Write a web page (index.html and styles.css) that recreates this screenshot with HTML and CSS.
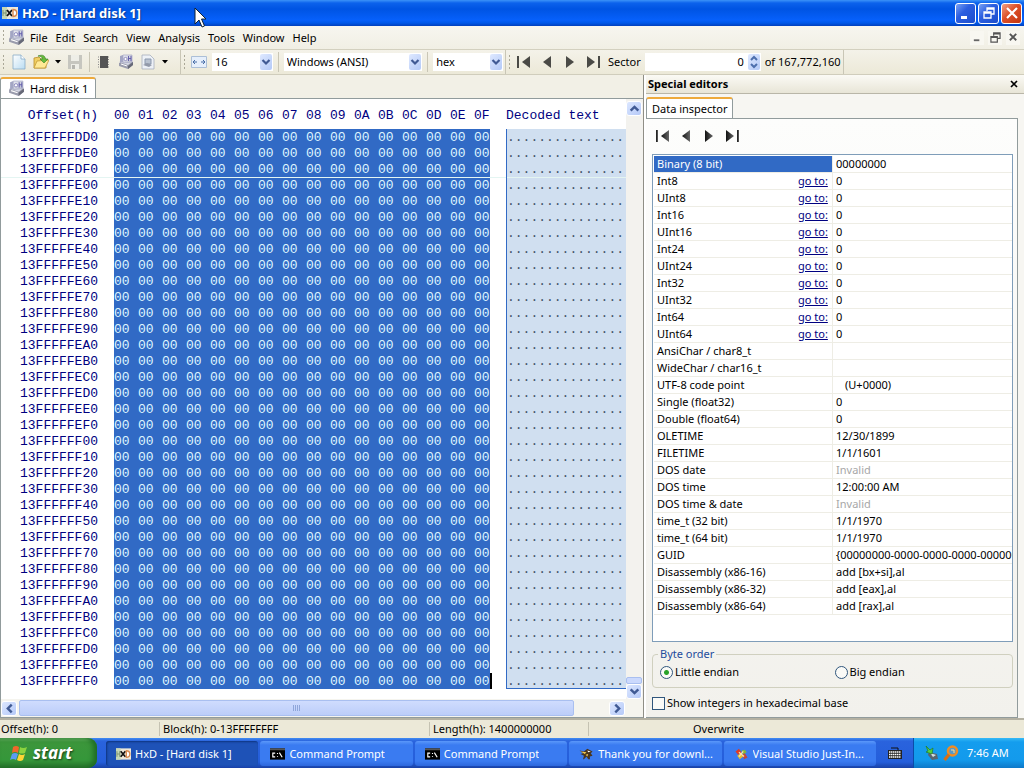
FILE: index.html
```html
<!DOCTYPE html>
<html lang="en">
<head>
<meta charset="utf-8">
<title>HxD - [Hard disk 1]</title>
<link rel="stylesheet" href="styles.css">
</head>
<body>
<svg class="defs" aria-hidden="true">
  <defs>
    <linearGradient id="silver" x1="0" y1="0" x2="1" y2="1"><stop offset="0" stop-color="#eceef5"/><stop offset="1" stop-color="#b4b7c8"/></linearGradient>
    <linearGradient id="page" x1="0" y1="0" x2="1" y2="1"><stop offset="0" stop-color="#fff"/><stop offset="1" stop-color="#b9dcf2"/></linearGradient>
    <linearGradient id="dark" x1="0" y1="0" x2="1" y2="0"><stop offset="0" stop-color="#111"/><stop offset="1" stop-color="#666"/></linearGradient>
  </defs>
  <symbol id="disk" viewBox="0 0 16 16">
    <path d="M1 9l4-2 10 1v3l-5 4-9-3z" fill="#9a9cad"/><path d="M1 8l4-3 10 2-5 4z" fill="#d5d8e4"/><path d="M10 12l5-4v3l-5 4z" fill="#666977"/>
    <path d="M2 2l3-1v7l-3 1z" fill="#a3a6c4"/><path d="M5 1h9v7l-9 1z" fill="url(#silver)" stroke="#a6a8c4" stroke-width=".7"/>
    <circle cx="7.500" cy="5" r="1.600" fill="#fff" stroke="#827eb8" stroke-width=".8"/><path d="M10.500 2v5M13 2v5M10.500 4.500H13" stroke="#6661ad" stroke-width="1"/><path d="M3 10l6 2" stroke="#fff"/>
  </symbol>
  <symbol id="hxd" viewBox="0 0 16 12">
    <path d="M0 0h16v12H0z" fill="#eee8d9"/><path d="M0 0h5v12H0z" fill="#c6d7b6"/><path d="M1 3v6M4 3v6M1 6h3" stroke="#7c9170" stroke-width="1"/>
    <path d="M5 3l5 6M10 3L5 9" stroke="#111" stroke-width="1.800"/><path d="M11 2.500c5 0 5 7 0 7z" fill="#fff" stroke="#d98a50" stroke-width="1.400"/>
  </symbol>
  <symbol id="first" viewBox="0 0 14 14"><path d="M0 1h2v12H0z"/><path d="M13 1v12L5 7z"/></symbol>
  <symbol id="prev" viewBox="0 0 14 14"><path d="M11 1v12L3 7z"/></symbol>
  <symbol id="next" viewBox="0 0 14 14"><path d="M3 1v12l8-6z"/></symbol>
  <symbol id="last" viewBox="0 0 14 14"><path d="M1 1v12l8-6z"/><path d="M12 1h2v12h-2z"/></symbol>
  <symbol id="chev" viewBox="0 0 10 10"><path d="M1.500 3L5 6.500 8.500 3" fill="none" stroke="#405a94" stroke-width="2.200"/></symbol>
  <symbol id="restore" viewBox="0 0 12 12"><path d="M4 4V1h7v6H8M4 2h7M1 5h7v6H1zM1 6h7" fill="none" stroke="currentColor" stroke-width="1.300"/></symbol>
  <symbol id="cmd" viewBox="0 0 16 12"><path d="M0 0h16v12H0z" fill="#000"/><path d="M0 0h16v2H0z" fill="#555"/><path d="M5.500 5H3v4h2.500M8 5v1M8 8v1M10 4.500l3 5" stroke="#fff" stroke-width="1.200" fill="none"/></symbol>
</svg>

<header class="titlebar">
  <svg class="app-icon"><use href="#hxd"/></svg>
  <h1>HxD - [Hard disk 1]</h1>
  <div class="win-buttons">
    <button class="win-btn" aria-label="Minimize"><svg viewBox="0 0 12 12"><path d="M1 9h6v3H1z" fill="#fff"/></svg></button>
    <button class="win-btn" aria-label="Restore"><svg><use href="#restore"/></svg></button>
    <button class="win-btn close" aria-label="Close"><svg viewBox="0 0 12 12"><path d="M1 1l10 10M11 1L1 11" stroke="#fff" stroke-width="2.200"/></svg></button>
  </div>
  <svg class="pointer" viewBox="0 0 13 21"><path d="M1 1v16l4-4 3 7 2.500-1L7.500 12H12z" fill="#fff" stroke="#123" stroke-width="1"/></svg>
</header>

<nav class="menubar">
  <span class="grip"></span>
  <svg class="icon"><use href="#disk"/></svg>
  <button>File</button><button>Edit</button><button>Search</button><button>View</button><button>Analysis</button><button>Tools</button><button>Window</button><button>Help</button>
  <div class="mdi">
    <button aria-label="Minimize document"><svg viewBox="0 0 12 12"><path d="M2 8h6v2H2z" fill="#666"/></svg></button>
    <button aria-label="Restore document"><svg><use href="#restore"/></svg></button>
    <button aria-label="Close document"><svg viewBox="0 0 12 12"><path d="M2 2l7 7M9 2L2 9" stroke="#555" stroke-width="2"/></svg></button>
  </div>
</nav>

<div class="toolbar">
  <div class="tools files">
    <span class="grip"></span>
    <button aria-label="New"><svg viewBox="0 0 16 16"><path d="M2 1h8l4 4v10H2z" fill="url(#page)" stroke="#88abc6" stroke-width=".8"/><path d="M10 1v4h4" fill="#fff" stroke="#88abc6" stroke-width=".8"/></svg></button>
    <button aria-label="Open"><svg viewBox="0 0 16 16"><path d="M1 14V4l5-1 2 2h5v9z" fill="#f0cf61" stroke="#b88d2c" stroke-width=".8"/><path d="M1 14l3-7 12-1-4 8z" fill="#ffe995" stroke="#c49a36" stroke-width=".8"/><path d="M5 2c5-2 7 0 7.500 3H15l-4 4-4-4h2.500C9 3 8 2 5 2z" fill="#67bb3c" stroke="#398026" stroke-width=".6"/></svg></button>
    <button aria-label="Recent files"><svg class="tri" viewBox="0 0 6 4"><path d="M0 0h6L3 3.500z"/></svg></button>
    <button aria-label="Save"><svg viewBox="0 0 16 16"><path d="M1 1h14v14H1z" fill="#c6c6bf"/><path d="M4 1h8v6H4zM4 10h8v5H4z" fill="#eeeee7"/><path d="M5 11h3v4H5z" fill="#b5b5af"/></svg></button>
    <span class="sep"></span>
    <button aria-label="Open main memory"><svg viewBox="0 0 16 16"><path d="M2 3h12M2 5.500h12M2 8h12M2 10.500h12M2 13h12" stroke="#888" stroke-dasharray="1 1"/><path d="M4 2h8v12H4z" fill="#555"/></svg></button>
    <button aria-label="Open disk"><svg><use href="#disk"/></svg></button>
    <button aria-label="Open disk image"><svg viewBox="0 0 16 16"><path d="M2 1h8l4 4v10H2z" fill="#edf1f7" stroke="#a7afbc" stroke-width=".8"/><path d="M5 5h6v5H5z" fill="#b9c2d0" stroke="#8b98ad"/><path d="M3 11l4-2 5 2-3 2z" fill="#9299a9"/></svg></button>
    <button aria-label="Disk image options"><svg class="tri" viewBox="0 0 6 4"><path d="M0 0h6L3 3.500z"/></svg></button>
  </div>
  <div class="tools formats">
    <span class="grip"></span>
    <button aria-label="Bytes per row"><svg viewBox="0 0 16 16"><path d="M.5 2.500h15v11H.5z" fill="#e6effb" stroke="#acbfd7"/><path d="M6 8H2M4 6L2 8l2 2M10 8h4M12 6l2 2-2 2" fill="none" stroke="#476da6"/></svg></button>
    <label class="combo bytes"><select aria-label="Bytes per row"><option>16</option></select><span class="drop"><svg><use href="#chev"/></svg></span></label>
    <span class="sep"></span>
    <label class="combo charset"><select aria-label="Character set"><option>Windows (ANSI)</option></select><span class="drop"><svg><use href="#chev"/></svg></span></label>
    <span class="sep"></span>
    <label class="combo base"><select aria-label="Offset base"><option>hex</option></select><span class="drop"><svg><use href="#chev"/></svg></span></label>
  </div>
  <div class="tools sectors">
    <span class="grip"></span>
    <div class="steps">
      <button aria-label="First sector"><svg><use href="#first"/></svg></button><button aria-label="Previous sector"><svg><use href="#prev"/></svg></button><button aria-label="Next sector"><svg><use href="#next"/></svg></button><button aria-label="Last sector"><svg><use href="#last"/></svg></button>
    </div>
    <label for="sector">Sector</label>
    <div class="combo spin"><input id="sector" type="text" value="0"><span class="drop"><svg viewBox="0 0 10 14"><path d="M2 5l3-3 3 3M2 9l3 3 3-3" fill="none" stroke="#4d6fad" stroke-width="2"/></svg></span></div>
    <span>of 167,772,160</span>
  </div>
</div>

<main class="workspace">
  <section class="document">
    <div class="tabs"><button class="tab doc-tab"><svg class="icon"><use href="#disk"/></svg>Hard disk 1</button></div>
    <div class="editor">
      <div class="hex-view">
        <table class="hex">
          <colgroup><col class="c-offset"><col span="15" class="c-byte"><col class="c-end"><col class="c-gap"><col></colgroup>
          <thead><tr id="hex-head"></tr></thead>
          <tbody id="hex-rows"></tbody>
        </table>
      </div>
      <div class="vscroll"><button class="arrow" aria-label="Scroll up"><svg class="up"><use href="#chev"/></svg></button><span class="vthumb"></span><button class="arrow" aria-label="Scroll down"><svg><use href="#chev"/></svg></button></div>
      <div class="hscroll"><button class="arrow" aria-label="Scroll left"><svg class="left"><use href="#chev"/></svg></button><span class="hthumb"><i></i><i></i><i></i><i></i></span><button class="arrow" aria-label="Scroll right"><svg class="right"><use href="#chev"/></svg></button></div>
    </div>
  </section>

  <aside class="side">
    <header class="side-head"><h2>Special editors</h2><button aria-label="Close panel"><svg viewBox="0 0 8 8"><path d="M1 1l6 6M7 1L1 7" stroke="#000" stroke-width="1.700"/></svg></button></header>
    <div class="tabs side-tabs"><button class="tab">Data inspector</button></div>
    <div class="inspector">
      <div class="steps"><button aria-label="First"><svg><use href="#first"/></svg></button><button aria-label="Previous"><svg><use href="#prev"/></svg></button><button aria-label="Next"><svg><use href="#next"/></svg></button><button aria-label="Last"><svg><use href="#last"/></svg></button></div>
      <div class="values-box">
        <table class="values">
          <colgroup><col class="c-name"><col class="c-goto"><col></colgroup>
          <tbody>
            <tr class="selected"><th colspan="2">Binary (8 bit)</th><td>00000000</td></tr>
            <tr><th>Int8</th><td><a href="#int8">go to:</a></td><td>0</td></tr>
            <tr><th>UInt8</th><td><a href="#uint8">go to:</a></td><td>0</td></tr>
            <tr><th>Int16</th><td><a href="#int16">go to:</a></td><td>0</td></tr>
            <tr><th>UInt16</th><td><a href="#uint16">go to:</a></td><td>0</td></tr>
            <tr><th>Int24</th><td><a href="#int24">go to:</a></td><td>0</td></tr>
            <tr><th>UInt24</th><td><a href="#uint24">go to:</a></td><td>0</td></tr>
            <tr><th>Int32</th><td><a href="#int32">go to:</a></td><td>0</td></tr>
            <tr><th>UInt32</th><td><a href="#uint32">go to:</a></td><td>0</td></tr>
            <tr><th>Int64</th><td><a href="#int64">go to:</a></td><td>0</td></tr>
            <tr><th>UInt64</th><td><a href="#uint64">go to:</a></td><td>0</td></tr>
            <tr><th colspan="2">AnsiChar / char8_t</th><td></td></tr>
            <tr><th colspan="2">WideChar / char16_t</th><td></td></tr>
            <tr><th colspan="2">UTF-8 code point</th><td class="indent">(U+0000)</td></tr>
            <tr><th colspan="2">Single (float32)</th><td>0</td></tr>
            <tr><th colspan="2">Double (float64)</th><td>0</td></tr>
            <tr><th colspan="2">OLETIME</th><td>12/30/1899</td></tr>
            <tr><th colspan="2">FILETIME</th><td>1/1/1601</td></tr>
            <tr><th colspan="2">DOS date</th><td class="invalid">Invalid</td></tr>
            <tr><th colspan="2">DOS time</th><td>12:00:00 AM</td></tr>
            <tr><th colspan="2">DOS time &amp; date</th><td class="invalid">Invalid</td></tr>
            <tr><th colspan="2">time_t (32 bit)</th><td>1/1/1970</td></tr>
            <tr><th colspan="2">time_t (64 bit)</th><td>1/1/1970</td></tr>
            <tr><th colspan="2">GUID</th><td>{00000000-0000-0000-0000-000000000000}</td></tr>
            <tr><th colspan="2">Disassembly (x86-16)</th><td>add [bx+si],al</td></tr>
            <tr><th colspan="2">Disassembly (x86-32)</th><td>add [eax],al</td></tr>
            <tr><th colspan="2">Disassembly (x86-64)</th><td>add [rax],al</td></tr>
          </tbody>
        </table>
      </div>
      <fieldset><legend>Byte order</legend>
        <label><input type="radio" name="order" checked>Little endian</label>
        <label><input type="radio" name="order">Big endian</label>
      </fieldset>
      <label class="check"><input type="checkbox">Show integers in hexadecimal base</label>
    </div>
  </aside>
</main>

<footer class="status"><span>Offset(h): 0</span><span>Block(h): 0-13FFFFFFFF</span><span>Length(h): 1400000000</span><span></span><span>Overwrite</span></footer>

<div class="taskbar">
  <button class="start"><svg viewBox="0 0 18 18"><path d="M3 3q3-2 6 0L8 9Q5 7 2 9z" fill="#f1672b"/><path d="M10 3q3 2 7 0l-2 6q-3 1-6 0z" fill="#8bd33f"/><path d="M2 10q3-2 6 0l-2 6q-3-2-6 0z" fill="#5b9cf2"/><path d="M9 10q3 2 6 0l-2 6q-3 2-6 0z" fill="#fcd535"/></svg>start</button>
  <div class="tasks">
    <button class="task active"><svg><use href="#hxd"/></svg><span>HxD - [Hard disk 1]</span></button>
    <button class="task"><svg><use href="#cmd"/></svg><span>Command Prompt</span></button>
    <button class="task"><svg><use href="#cmd"/></svg><span>Command Prompt</span></button>
    <button class="task"><svg viewBox="0 0 16 14"><path d="M0 3l5 1 4-3 6 3-2 2 2 3-3 1v3h-2l-2-3-3 3H4l1-4-4-2 3-1z" fill="#49351f"/><path d="M1 4l7 1-2 2zM7 8l3-1-1 3z" fill="#f0c74c"/><path d="M9 3l4 1-3 1z" fill="#fff"/></svg><span>Thank you for downl...</span></button>
    <button class="task"><svg viewBox="0 0 16 14"><path d="M1 4l4-3 3 4-4 3z" fill="#df3b25"/><path d="M8 3l4-1 2 3-4 3z" fill="#86b73c"/><path d="M3 9l4-3 3 4-4 3z" fill="#e7bb2f"/><path d="M9 8l3-2 3 5-4 2z" fill="#c54638"/><path d="M5 5l6 5M10 4L5 10" stroke="#ffe6a0" stroke-width="1.500"/></svg><span>Visual Studio Just-In...</span></button>
  </div>
  <button class="lang" aria-label="Keyboard layout"><svg viewBox="0 0 14 12"><path d="M3 1h7v2" fill="none" stroke="#111"/><path d="M0 3h14v9H0z" fill="#222"/><path d="M1 5h12M1 7.500h12M1 10h12" stroke="#fff" stroke-width="1.500" stroke-dasharray="1.500 .5"/></svg></button>
  <div class="tray">
    <svg viewBox="0 0 16 16"><path d="M5 7l8 2 1 5-6 1-4-5z" fill="#59656f"/><path d="M6 8l6 2-3 2z" fill="#d6e2e4"/><path d="M2 1l4 4 3-2-1 6-6-2 2-1z" fill="#55d23c" stroke="#237b29" stroke-width=".7"/></svg>
    <svg viewBox="0 0 16 16"><circle cx="9.500" cy="6" r="4.500" fill="#5798c7" stroke="#ee8d24" stroke-width="2.500"/><path d="M6 9.500L1.500 15" stroke="#d56f18" stroke-width="3.200"/><path d="M8 5h3v3" stroke="#ffe090" fill="none"/></svg>
    <time>7:46 AM</time>
  </div>
</div>
<script src="hex.js"></script>
</body>
</html>
```
FILE: styles.css
```css
* { box-sizing: border-box; }
body { margin: 0; min-height: 100vh; display: flex; flex-direction: column; background: #f2f0e6; color: #000; font: 11px/16px "Noto Sans", sans-serif; }
button, input, select { font: inherit; color: inherit; margin: 0; padding: 0; border: 0; background: none; }
h1, h2 { margin: 0; }
svg { display: block; flex: none; }
.defs { position: absolute; width: 0; height: 0; }
.icon { width: 17px; height: 17px; }

.titlebar { position: relative; height: 26px; display: flex; align-items: center; gap: 4px; padding: 0 2px; color: #fff; background: linear-gradient(#3c93f8 0, #0c62ec 3px, #0054e3 9px, #0660fb 20px, #0058e8 23px, #0240bc); }
.titlebar h1 { flex: 1; font: bold 13px/20px "Noto Sans", sans-serif; text-shadow: 1px 1px 1px #123d91; }
.app-icon { width: 16px; height: 12px; }
.win-buttons { display: flex; gap: 2px; }
.win-btn { width: 21px; height: 21px; display: grid; place-items: center; color: #fff; border: 1px solid #fff; border-radius: 3px; background: linear-gradient(135deg, #7aa2f5, #2c5fe0 40%, #1c4dcc); }
.win-btn svg { width: 12px; height: 12px; }
.win-btn.close { background: linear-gradient(135deg, #f0a186, #dd4f27 45%, #c3350f); }
.pointer { position: absolute; left: 194px; top: 7px; width: 13px; height: 21px; }

.menubar { height: 24px; display: flex; align-items: center; padding-left: 2px; background: linear-gradient(#f7f6f0, #f1efe4); border-bottom: 1px solid #d3d0bf; }
.menubar > .icon { margin: 0 1px 0 3px; }
.menubar > button { padding: 0 4px; }
.mdi { display: flex; gap: 4px; margin-left: auto; padding-right: 4px; color: #555; }
.mdi button { width: 14px; height: 14px; display: grid; place-items: center; background: #f8f7f1; }
.mdi svg { width: 11px; height: 11px; }
.grip { width: 3px; height: 17px; background: radial-gradient(circle, #aaa797 1px, transparent 1px) 0 0 / 3px 4px; }

.toolbar { height: 25px; display: flex; background: linear-gradient(#f4f2e9, #ece9d8); border-bottom: 1px solid #d0cdbc; }
.tools { display: flex; align-items: center; padding: 0 2px; border-right: 1px solid #c9c6b6; }
.tools button { display: grid; place-items: center; }
.tools button svg { width: 16px; height: 16px; }
.tools .tri, .tools button .tri { width: 6px; height: 4px; }
.sep { width: 1px; height: 20px; background: #c9c6b6; }
.files { gap: 6px; width: 181px; }
.formats { gap: 5px; width: 325px; }
.sectors { gap: 4px; }
.combo { display: flex; height: 18px; background: #fff; padding: 1px; }
.combo select, .combo input { appearance: none; flex: 1; min-width: 0; padding: 0 2px; outline: 0; }
.combo input { text-align: right; padding-right: 4px; }
.drop { width: 12px; display: grid; place-items: center; border-radius: 2px; background: linear-gradient(135deg, #dfe9ff, #b3c9f7); }
.drop svg { width: 10px; height: 10px; }
.bytes { width: 61px; }
.charset { width: 139px; }
.base { width: 70px; }
.spin { width: 116px; }
.spin .drop svg { width: 10px; height: 14px; }
.steps { display: flex; gap: 9px; fill: url(#dark); }
.steps button { display: grid; place-items: center; }
.steps svg, .tools .steps svg { width: 14px; height: 14px; }
.tools .steps { padding: 0 4px 0 2px; fill: #4a4a46; }

.workspace { flex: 1; display: grid; grid-template-columns: minmax(0, 1fr) 380px; }
.document { display: flex; flex-direction: column; min-width: 0; border-right: 1px solid #8f8e86; }
.tabs { display: flex; align-items: flex-end; height: 23px; }
.tab { display: flex; align-items: center; gap: 5px; height: 21px; padding: 0 7px; border: 1px solid #919b9c; border-top: 2px solid #eeaa3c; border-bottom: 0; border-radius: 3px 3px 0 0; background: #fff; }
.editor { flex: 1; display: grid; grid-template: minmax(0, 1fr) 18px / minmax(0, 1fr) 17px; border: 1px solid #919b9c; border-right: 0; background: #fff; }
.hex-view { overflow: hidden; }
.hex { width: 100%; table-layout: fixed; border-collapse: separate; border-spacing: 0; font: 13px/15px "Liberation Mono", monospace; color: #000080; }
.hex th, .hex td { height: 16px; padding: 1px 0 0; font-weight: normal; text-align: left; white-space: nowrap; }
.hex thead th { height: 30px; padding-top: 3px; }
.c-offset { width: 113px; }
.c-byte { width: 24px; }
.c-end, .c-gap { width: 16px; }
.hex .offset { text-align: right; padding-right: 16px; }
.hex .byte { background: #316ac5; color: #dff6ff; }
.hex .text { background: #d0dff0; border-left: 1px solid #316ac5; color: #44546a; }
.hex .sector > * { background-image: linear-gradient(#e4f5f2 1px, transparent 1px); }
.hex tr:last-child .text { box-shadow: inset 0 -1px #316ac5; }
.hex tr:last-child .byte:nth-child(17) { box-shadow: 2px 0 #000; }

.vscroll { display: flex; flex-direction: column; padding-top: 2px; background: #f3f2ee; }
.arrow { width: 16px; height: 15px; display: grid; place-items: center; border: 1px solid #fff; border-radius: 3px; background: linear-gradient(135deg, #dce7ff, #b5c9f8); }
.arrow svg { width: 11px; height: 11px; }
.up { transform: rotate(180deg); }
.left { transform: rotate(90deg); }
.right { transform: rotate(-90deg); }
.vthumb { height: 7px; width: 16px; margin-top: auto; border: 1px solid #a9bff0; border-radius: 2px; background: #cbd9fd; }
.hscroll { grid-column: 1 / -1; display: flex; align-items: center; padding: 0 18px 0 0; background: #f5f4ee; }
.hthumb { flex: 0 1 555px; height: 16px; margin: 0 auto 0 2px; display: flex; align-items: center; justify-content: center; gap: 1px; border: 1px solid #a9bff0; border-radius: 2px; background: linear-gradient(#cfdcfe, #bccdf9); }
.hthumb i { width: 1px; height: 6px; background: #8fa6da; }

.side { display: flex; flex-direction: column; padding-right: 6px; border-left: 2px solid #fff; background: #f7f6f2; }
.side-head { display: flex; align-items: center; justify-content: space-between; height: 19px; margin-right: -6px; padding: 0 6px 0 2px; background: linear-gradient(#fbfaf5, #e8e5d7); border-bottom: 1px solid #b9b6a8; }
.side-head h2 { font: bold 11px/16px "Noto Sans", sans-serif; }
.side-head svg { width: 8px; height: 8px; }
.side-tabs { height: 24px; }
.side-tabs .tab { padding: 0 4px 0 5px; }
.inspector { flex: 1; display: flex; flex-direction: column; padding: 10px 4px 5px 6px; border: 1px solid #919b9c; border-left: 0; background: linear-gradient(#fdfdfc, #f2f1ec); }
.inspector .steps { padding: 0 4px; height: 25px; align-items: flex-start; }
.values-box { flex: 1; border: 1px solid #7f9db9; background: #fff; padding: 1px 0 0 1px; }
.values { width: 100%; table-layout: fixed; border-collapse: separate; border-spacing: 0; }
.values th, .values td { height: 17px; padding: 0 0 0 3px; line-height: 16px; font-weight: normal; text-align: left; white-space: nowrap; overflow: hidden; border-bottom: 1px solid #eeede5; }
.values td:last-child { padding-left: 3px; border-left: 1px solid #eeede5; }
.values .selected th { background: #316ac5; color: #fff; }
.values a { color: #000080; }
.values td.indent:last-child { padding-left: 12px; }
.c-name { width: 141px; }
.c-goto { width: 37px; }
.invalid { color: #a7a7a7; }
fieldset { display: grid; grid-template-columns: 1fr 1fr; min-width: 0; margin: 4px 0 7px; padding: 2px 3px 7px 7px; border: 1px solid #d0d0bf; border-radius: 4px; }
legend { padding: 0 2px; margin-left: -2px; color: #234c9c; }
fieldset label, .check { display: flex; align-items: center; gap: 2px; }
.check { margin-bottom: 1px; }
input[type="radio"], input[type="checkbox"] { appearance: none; width: 13px; height: 13px; border: 1px solid #30567c; background: #fafaf7; }
input[type="radio"] { border-radius: 50%; }
input[type="radio"]:checked { background: radial-gradient(circle, #28a228 2px, #fafaf7 3px); }

.status { display: grid; grid-template-columns: 159px 270px 159px 103px 1fr; height: 20px; align-items: center; background: #ece9d8; border-top: 2px solid #b4b1a2; }
.status span { height: 14px; line-height: 14px; padding-left: 3px; border-left: 1px solid #c5c2b2; }
.status span:first-child { border-left: 0; padding-left: 1px; }
.status span:last-child { border-left: 0; padding-left: 2px; }

.taskbar { display: flex; height: 30px; color: #fff; background: linear-gradient(#3f8cf3 0, #2a63dd 3px, #245edb 24px, #1941a5); }
.start { width: 97px; display: flex; align-items: center; gap: 5px; padding-left: 10px; border-radius: 0 9px 9px 0; font: italic bold 17px/24px "Noto Sans", sans-serif; text-shadow: 1px 1px 2px #173d18; background: linear-gradient(#6cb768 0, #3c963b 4px, #35973a 22px, #25722a); box-shadow: inset -4px 0 5px #1f6d25; }
.start svg { width: 18px; height: 18px; }
.tasks { flex: 1; display: grid; grid-template-columns: repeat(5, minmax(0, 1fr)); gap: 2px; padding: 3px 1px 2px 9px; }
.task { display: flex; align-items: center; gap: 4px; padding-left: 10px; border-radius: 3px; background: linear-gradient(#5b98fa, #3a7bf1 4px, #3a7bf1 20px, #2d67dc); }
.task svg { width: 15px; height: 12px; }
.task.active { background: #1e52b7; box-shadow: inset 1px 1px 2px #0e347f; }
.task span { overflow: hidden; white-space: nowrap; }
.lang { width: 36px; display: grid; place-items: center; }
.lang svg { width: 14px; height: 12px; }
.tray { width: 111px; display: flex; align-items: center; gap: 3px; padding-left: 10px; border-left: 1px solid #0b4ca8; background: linear-gradient(#35baf6 0, #149dee 4px, #139aec 22px, #0e78c8); }
.tray svg { width: 16px; height: 16px; }
.tray time { margin-left: 5px; }
```
FILE: hex.js
```js
const hexByte = n => n.toString(16).toUpperCase().padStart(2, "0");
const cells = (tag, values) => values.map(v => `<${tag} class="byte">${v}</${tag}>`).join("");

document.getElementById("hex-head").innerHTML =
  `<th class="offset">Offset(h)</th>` +
  Array.from({ length: 16 }, (_, i) => `<th>${hexByte(i)}</th>`).join("") +
  `<th></th><th>Decoded text</th>`;

const start = 0x13FFFFFDD0;
let rows = "";
for (let i = 0; i < 35; i++) {
  const offset = start + i * 16;
  const sector = offset % 512 === 0 ? ' class="sector"' : "";
  rows += `<tr${sector}><th class="offset">${offset.toString(16).toUpperCase()}</th>` +
    cells("td", Array(16).fill("00")) + `<td></td><td class="text">${".".repeat(15)}</td></tr>`;
}
document.getElementById("hex-rows").innerHTML = rows;
```
